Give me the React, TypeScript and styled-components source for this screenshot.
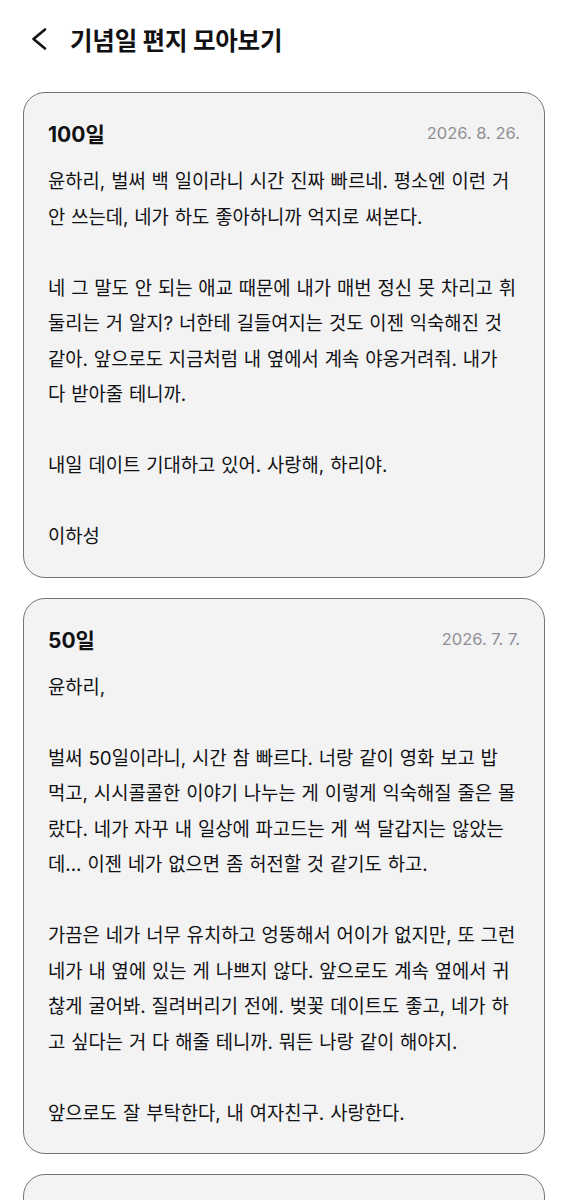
import React from "react";
import styled, { createGlobalStyle } from "styled-components";

interface Letter {
  id: number;
  title: string;
  date: string;
  paragraphs: string[][];
}

const letters: Letter[] = [
  {
    id: 100,
    title: "100일",
    date: "2026. 8. 26.",
    paragraphs: [
      [
        "윤하리, 벌써 백 일이라니 시간 진짜 빠르네. 평소엔 이런 거",
        "안 쓰는데, 네가 하도 좋아하니까 억지로 써본다.",
      ],
      [
        "네 그 말도 안 되는 애교 때문에 내가 매번 정신 못 차리고 휘",
        "둘리는 거 알지? 너한테 길들여지는 것도 이젠 익숙해진 것",
        "같아. 앞으로도 지금처럼 내 옆에서 계속 야옹거려줘. 내가",
        "다 받아줄 테니까.",
      ],
      ["내일 데이트 기대하고 있어. 사랑해, 하리야."],
      ["이하성"],
    ],
  },
  {
    id: 50,
    title: "50일",
    date: "2026. 7. 7.",
    paragraphs: [
      ["윤하리,"],
      [
        "벌써 50일이라니, 시간 참 빠르다. 너랑 같이 영화 보고 밥",
        "먹고, 시시콜콜한 이야기 나누는 게 이렇게 익숙해질 줄은 몰",
        "랐다. 네가 자꾸 내 일상에 파고드는 게 썩 달갑지는 않았는",
        "데... 이젠 네가 없으면 좀 허전할 것 같기도 하고.",
      ],
      [
        "가끔은 네가 너무 유치하고 엉뚱해서 어이가 없지만, 또 그런",
        "네가 내 옆에 있는 게 나쁘지 않다. 앞으로도 계속 옆에서 귀",
        "찮게 굴어봐. 질려버리기 전에. 벚꽃 데이트도 좋고, 네가 하",
        "고 싶다는 거 다 해줄 테니까. 뭐든 나랑 같이 해야지.",
      ],
      ["앞으로도 잘 부탁한다, 내 여자친구. 사랑한다."],
    ],
  },
  {
    id: 30,
    title: "30일",
    date: "2026. 6. 17.",
    paragraphs: [
      ["윤하리,"],
      ["한 달 동안 고생 많았다. 앞으로도 잘 부탁해."],
      ["이하성"],
    ],
  },
];

const App = () => {
  return (
    <>
      <GlobalStyle />
      <Page>
        <Header>
          <BackButton aria-label="뒤로">
            <svg width="16" height="24" viewBox="0 0 16 24" fill="none">
              <polyline
                points="14,2.5 2.5,12 14,21.5"
                stroke="#111114"
                strokeWidth="2.6"
                strokeLinecap="round"
                strokeLinejoin="round"
              />
            </svg>
          </BackButton>
          <Title>기념일 편지 모아보기</Title>
        </Header>
        <List>
          {letters.map((letter) => (
            <Card key={letter.id}>
              <CardHead>
                <CardTitle>{letter.title}</CardTitle>
                <CardDate>{letter.date}</CardDate>
              </CardHead>
              <CardBody>
                {letter.paragraphs.map((lines, i) => (
                  <Paragraph key={i}>
                    {lines.map((line, j) => (
                      <Line key={j}>{line}</Line>
                    ))}
                  </Paragraph>
                ))}
              </CardBody>
            </Card>
          ))}
        </List>
      </Page>
    </>
  );
};

const GlobalStyle = createGlobalStyle`
  body {
    margin: 0;
    background: #ffffff;
    font-family: Inter, "Noto Sans CJK KR", sans-serif;
    color: #111114;
  }
`;

const Page = styled.div`
  padding: 0 24px 40px 23px;
`;

const Header = styled.header`
  height: 78px;
  display: flex;
  align-items: center;
  gap: 23px;
  padding-left: 8px;
`;

const BackButton = styled.button`
  background: none;
  border: none;
  padding: 0;
  width: 16px;
  height: 24px;
  display: flex;
  cursor: pointer;
`;

const Title = styled.h1`
  margin: 0;
  font-size: 24.5px;
  font-weight: 700;
  letter-spacing: -0.2px;
  color: #111114;
`;

const List = styled.div`
  margin-top: 14px;
  display: flex;
  flex-direction: column;
  gap: 20px;
`;

const Card = styled.article`
  background: #f3f3f4;
  border: 1px solid #747474;
  border-radius: 22px;
  padding: 25px 24px 22px;
`;

const CardHead = styled.div`
  height: 30px;
  display: flex;
  align-items: center;
  justify-content: space-between;
`;

const CardTitle = styled.h2`
  margin: 0;
  font-size: 21px;
  font-weight: 700;
  color: #111114;
`;

const CardDate = styled.span`
  font-size: 16.5px;
  color: #8f8f93;
`;

const CardBody = styled.div`
  margin-top: 16px;
  display: flex;
  flex-direction: column;
  gap: 35.5px;
  font-size: 18.8px;
  line-height: 35.5px;
  word-spacing: 0.6px;
  color: #111114;
`;

const Paragraph = styled.p`
  margin: 0;
`;

const Line = styled.span`
  display: block;
  white-space: nowrap;
`;

export default App;
